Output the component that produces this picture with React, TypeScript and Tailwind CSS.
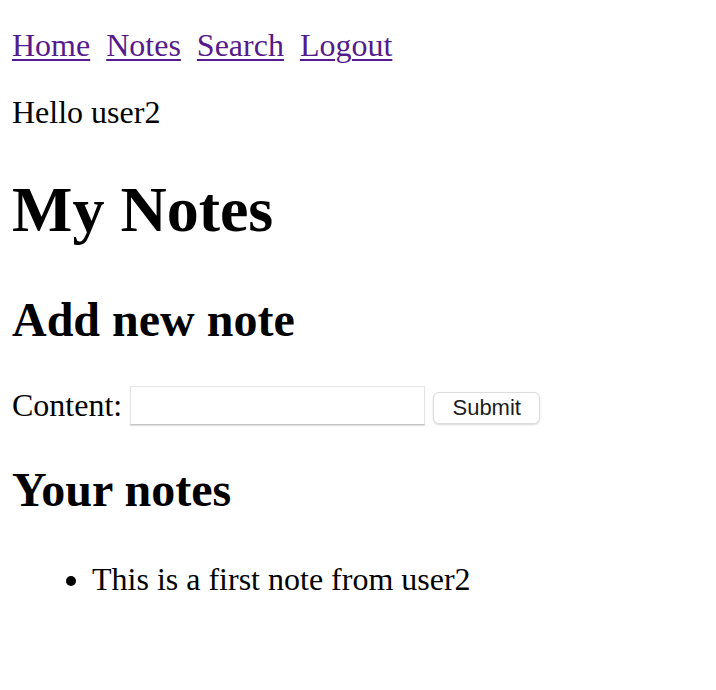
export default function App() {
  const links = ["Home", "Notes", "Search", "Logout"];

  return (
    <div className="flex flex-col items-start px-3 pt-[27px] font-['Liberation_Serif',serif] text-[32px] leading-[37px] text-black">
      <nav className="flex gap-4">
        {links.map((l) => (
          <a key={l} href="#" className="text-[#551a8b] underline decoration-[1.5px] underline-offset-[3px]">
            {l}
          </a>
        ))}
      </nav>
      <p className="mt-[30px]">Hello user2</p>

      <h1 className="mt-[42px] text-[64px] leading-[74px] font-bold">My Notes</h1>

      <h2 className="mt-[45px] text-[48px] leading-[55px] font-bold">Add new note</h2>
      <form className="mt-[39px] flex items-start" onSubmit={(e) => e.preventDefault()}>
        <label className="mt-[1px]">Content:</label>
        <input
          type="text"
          className="ml-2 h-[39px] w-[295px] border border-[#e4e4e4] border-b-[#c4c4c4] bg-white shadow-[0_1px_1px_rgba(0,0,0,0.12)] outline-none"
        />
        <button
          type="submit"
          className="ml-2 mt-[6px] h-[32px] w-[107px] rounded-[6px] border border-[#dcdcdc] bg-white font-['Liberation_Sans',sans-serif] text-[22px] leading-[30px] text-[#1c1c1c] shadow-[0_1px_2px_rgba(0,0,0,0.15)]"
        >
          Submit
        </button>
      </form>

      <h2 className="mt-[37px] text-[48px] leading-[55px] font-bold">Your notes</h2>
      <ul className="mt-[44px] list-disc pl-20">
        <li>This is a first note from user2</li>
      </ul>
    </div>
  );
}
